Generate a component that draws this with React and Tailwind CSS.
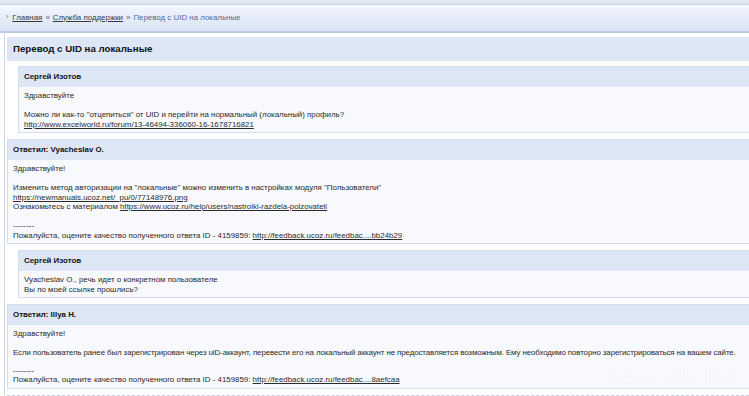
const A = ({ children }) => (
  <a href="#" className="underline text-[#2b2b2b]">{children}</a>
);

function Post({ indent, title, children }) {
  return (
    <div className={`${indent ? "ml-[11px]" : ""} mb-[6px] border border-r-0 border-[#d3ddee] bg-[#f7f9fd]`}>
      <div className="h-[20px] bg-[#dde6f5] flex items-center pl-[5px] font-bold text-[#111]">{title}</div>
      <div className="px-[5px] pt-[4px] pb-[3px] leading-[9.5px] whitespace-nowrap">{children}</div>
    </div>
  );
}

export default function App() {
  return (
    <div className="relative w-[749px] h-[396px] overflow-hidden bg-white text-[7.9px] text-[#2a2a2a]" style={{ fontFamily: '"Liberation Sans", Arial, sans-serif' }}>
      <div className="h-[4px] bg-[#e1e7f2]" />
      {/* breadcrumbs */}
      <div className="h-[29px] border-t border-[#c6d4ea] border-b-2 border-b-[#b9cbe8] bg-gradient-to-b from-[#f4f7fd] to-[#d8e3f6] flex items-center pl-[6px] pb-[1px] text-[#56698c]">
        <span className="mr-[4px] text-[7px]">›</span>
        <a href="#" className="underline text-[#3a3a3a]">Главная</a>
        <span className="mx-[3px]">»</span>
        <a href="#" className="underline text-[#3a3a3a]">Служба поддержки</a>
        <span className="mx-[3px]">»</span>
        <span>Перевод с UID на локальные</span>
      </div>

      <div className="ml-[4px] border-l border-[#cbd8ee] pl-[2px] pt-[4px] w-[760px]">
        <div className="h-[24px] mb-[5px] bg-[#dde6f5] flex items-center pl-[6px] font-bold text-[9.7px] text-[#111]">
          Перевод с UID на локальные
        </div>

        <Post indent title="Сергей Изотов">
          <div>Здравствуйте</div>
          <div className="h-[9.5px]" />
          <div>Можно ли как-то "отцепиться" от UID и перейти на нормальный (локальный) профиль?</div>
          <div><A>http://www.excelworld.ru/forum/13-46494-336060-16-1678716821</A></div>
        </Post>

        <Post title="Ответил: Vyacheslav O.">
          <div>Здравствуйте!</div>
          <div className="h-[9.5px]" />
          <div>Изменить метод авторизации на "локальные" можно изменить в настройках модуля "Пользователи"</div>
          <div><A>https://newmanuals.ucoz.net/_pu/0/77148976.png</A></div>
          <div>Ознакомьтесь с материалом <A>https://www.ucoz.ru/help/users/nastroiki-razdela-polzovateli</A></div>
          <div className="h-[9.5px]" />
          <div>--------</div>
          <div>Пожалуйста, оцените качество полученного ответа ID - 4159859: <A>http://feedback.ucoz.ru/feedbac....bb24b29</A></div>
        </Post>

        <Post indent title="Сергей Изотов">
          <div>Vyacheslav O., речь идет о конкретном пользователе</div>
          <div>Вы по моей ссылке прошлись?</div>
        </Post>

        <Post title="Ответил: Illya H.">
          <div>Здравствуйте!</div>
          <div className="h-[9.5px]" />
          <div className="tracking-[-0.1px]">Если пользователь ранее был зарегистрирован через uiD-аккаунт, перевести его на локальный аккаунт не предоставляется возможным. Ему необходимо повторно зарегистрироваться на вашем сайте.</div>
          <div className="h-[8px]" />
          <div>--------</div>
          <div>Пожалуйста, оцените качество полученного ответа ID - 4159859: <A>http://feedback.ucoz.ru/feedbac....8aefcaa</A></div>
        </Post>

        <div className="border-t border-dashed border-[#c3d0e6]" />
      </div>

      <div className="absolute right-[12px] bottom-[8px] text-[16px] text-white" style={{ textShadow: "0 0 1px #e1e7f1" }}>
        www.excelworld.ru
      </div>
    </div>
  );
}
